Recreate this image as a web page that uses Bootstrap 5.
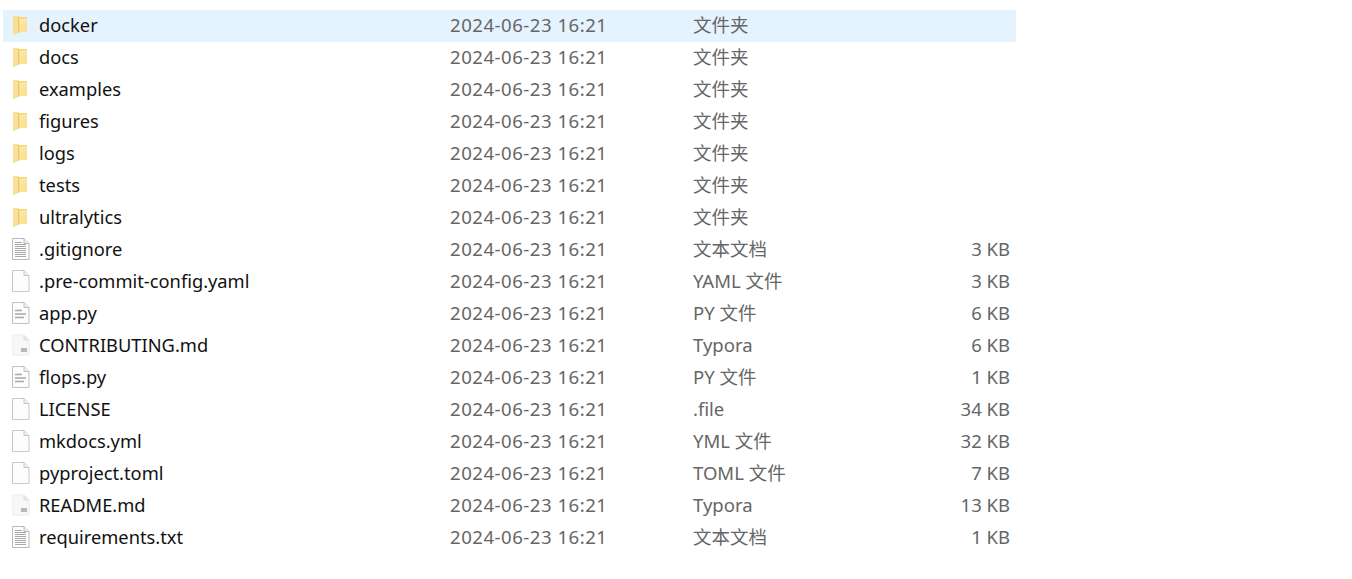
<!DOCTYPE html>
<html lang="zh">
<head>
    <meta charset="UTF-8">
    <title>文件列表</title>
    <link href="https://cdn.jsdelivr.net/npm/bootstrap@5.3.3/dist/css/bootstrap.min.css" rel="stylesheet">
    <style>
        body { background: #fff; font-family: "Noto Sans", "Noto Sans CJK SC", sans-serif; font-size: 18.5px; overflow: hidden; }
        .file-list { width: 1013px; margin: 10px 0 0 3px; }
        .file-row { height: 32px; line-height: 30px; white-space: nowrap; }
        .file-row.active-row { background: #e5f3ff; }
        .file-icon { width: 18px; height: 22px; margin: 4px 9px 0 9px; flex: none; }
        .file-name { width: 411px; color: #111; flex: none; font-size: 18.3px; }
        .file-date { width: 243px; color: #666; flex: none; font-size: 18.6px; letter-spacing: .5px; }
        .file-type { width: 180px; color: #666; flex: none; }
        .file-size { width: 137px; color: #666; text-align: right; flex: none; }
    </style>
</head>
<body>

    <svg width="0" height="0" class="d-block">
        <defs>
            <linearGradient id="g-front" x1="0" y1="0" x2="1" y2="1">
                <stop offset="0" stop-color="#fce9ab"/>
                <stop offset="1" stop-color="#f9dd8b"/>
            </linearGradient>
            <symbol id="i-folder" viewBox="0 0 18 22">
                <path d="M1 2h5l1 1v15l-4.500 3-1.500-.5z" fill="#f8df96"/>
                <path d="M6 3h9v15H6z" fill="#f5d681"/>
                <path d="M6 3h1.500v15.500L6 19z" fill="#ecc86b"/>
                <path d="M7.500 4.500H15V18H7.500z" fill="url(#g-front)"/>
            </symbol>
            <symbol id="i-blank" viewBox="0 0 18 22">
                <path d="M.5.5h11.500l5 5v16H.5z" fill="#fdfdfd" stroke="#c8c8c8"/>
                <path d="M12 .5v5h5" fill="#eee" stroke="#c8c8c8"/>
            </symbol>
            <symbol id="i-text" viewBox="0 0 18 22">
                <path d="M.5.5h11.500l5 5v16H.5z" fill="#fdfdfd" stroke="#b8b8b8"/>
                <path d="M12 .5v5h5" fill="#eee" stroke="#b8b8b8"/>
                <path d="M3 4.500h7M3 6.500h11M3 8.500h11M3 10.500h11M3 12.500h11M3 14.500h11M3 16.500h11M3 18.500h11" stroke="#a8a8a8"/>
            </symbol>
            <symbol id="i-py" viewBox="0 0 18 22">
                <path d="M.5.5h11.500l5 5v16H.5z" fill="#fdfdfd" stroke="#c0c0c0"/>
                <path d="M12 .5v5h5" fill="#eee" stroke="#c0c0c0"/>
                <path d="M3 8.500h7M3 12h11M3 15.500h9" stroke="#a9a9a9" stroke-width="1.500"/>
            </symbol>
            <symbol id="i-md" viewBox="0 0 18 22">
                <path d="M1 1h11l5 5v15H1z" fill="#f8f8f8" stroke="#ececec"/>
                <path d="M12 1v5h5" fill="#e8e8e8" stroke="#e2e2e2"/>
                <path d="M9 14h6v4H9z" fill="#b8b8b8"/>
            </symbol>
        </defs>
    </svg>

    <div class="file-list" id="fileList"></div>

    <script>
        const files = [
            ['docker', '文件夹', '', 'folder'],
            ['docs', '文件夹', '', 'folder'],
            ['examples', '文件夹', '', 'folder'],
            ['figures', '文件夹', '', 'folder'],
            ['logs', '文件夹', '', 'folder'],
            ['tests', '文件夹', '', 'folder'],
            ['ultralytics', '文件夹', '', 'folder'],
            ['.gitignore', '文本文档', '3 KB', 'text'],
            ['.pre-commit-config.yaml', 'YAML 文件', '3 KB', 'blank'],
            ['app.py', 'PY 文件', '6 KB', 'py'],
            ['CONTRIBUTING.md', 'Typora', '6 KB', 'md'],
            ['flops.py', 'PY 文件', '1 KB', 'py'],
            ['LICENSE', '.file', '34 KB', 'blank'],
            ['mkdocs.yml', 'YML 文件', '32 KB', 'blank'],
            ['pyproject.toml', 'TOML 文件', '7 KB', 'blank'],
            ['README.md', 'Typora', '13 KB', 'md'],
            ['requirements.txt', '文本文档', '1 KB', 'text']
        ];
        const list = document.getElementById('fileList');
        files.forEach((f, index) => {
            const row = `
                <div class="file-row d-flex align-items-start ${index === 0 ? 'active-row' : ''}">
                    <svg class="file-icon"><use href="#i-${f[3]}"></use></svg>
                    <div class="file-name">${f[0]}</div>
                    <div class="file-date">2024-06-23 16:21</div>
                    <div class="file-type">${f[1]}</div>
                    <div class="file-size">${f[2]}</div>
                </div>
            `;
            list.insertAdjacentHTML('beforeend', row);
        });
    </script>
    <script src="https://cdn.jsdelivr.net/npm/bootstrap@5.3.3/dist/js/bootstrap.bundle.min.js"></script>
</body>
</html>
